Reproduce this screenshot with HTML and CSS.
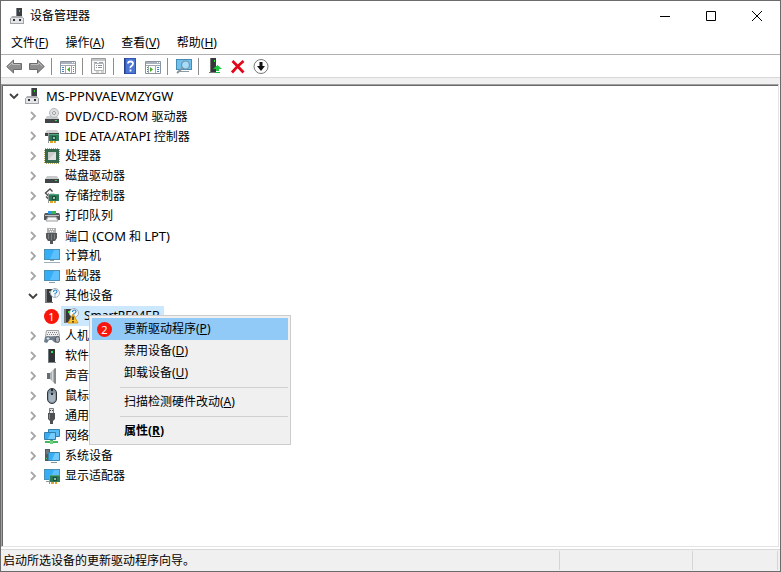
FILE: index.html
```html
<!DOCTYPE html>
<html lang="zh-CN">
<head>
    <meta charset="UTF-8">
    <meta name="viewport" content="width=device-width, initial-scale=1.0">
    <title>设备管理器</title>
    <link rel="stylesheet" href="styles.css">
</head>
<body>

    <!-- Shared icons -->
    <svg class="sprite" aria-hidden="true">
        <symbol id="closed" viewBox="0 0 16 16">
            <path d="M6 4l4 4-4 4" fill="none" stroke="#a6a6a6" stroke-width="1.8"/>
        </symbol>
        <symbol id="open" viewBox="0 0 16 16">
            <path d="M4 6l4 4 4-4" fill="none" stroke="#404040" stroke-width="1.8"/>
        </symbol>
        <symbol id="machine" viewBox="0 0 16 16">
            <path d="M6 0h6v9H6z" fill="#3c4043"/>
            <path d="M6 0h1v9H6z" fill="#80858a"/>
            <path d="M9 2h1v2H9z" fill="#2fd12f"/>
            <path d="M2 8h10l2 3H0z" fill="#aeb0b4"/>
            <path d="M0 10h14v6H0z" fill="#a2a4a8"/>
            <path d="M1 10h12v5H1z" fill="#e4e5e8"/>
            <path d="M3 11h2v2H3zM9 11h2v2H9z" fill="#333"/>
        </symbol>
        <symbol id="tower" viewBox="0 0 16 16">
            <path d="M2 1h6v14H2z" fill="#34383a"/>
            <path d="M1 1h2v14H1z" fill="#7b7e80"/>
            <path d="M5 3h2v2H5z" fill="#27e427"/>
            <path d="M1 14h8v1H1z" fill="#777"/>
        </symbol>
        <symbol id="screen" viewBox="0 0 16 16">
            <path d="M0 2h16v11H0z" fill="#4a8fb5"/>
            <path d="M1 3h14v9H1z" fill="#35adf7"/>
            <path d="M10 3h5v9H6z" fill="#5dc0fd"/>
        </symbol>
        <symbol id="drive" viewBox="0 0 16 16">
            <path d="M3 8h10l2 3H1z" fill="#c9cacc"/>
            <path d="M1 11h14v4H1z" fill="#3f4446"/>
            <path d="M11 12h2v1h-2z" fill="#32dc4a"/>
        </symbol>
        <symbol id="card" viewBox="0 0 16 16">
            <path d="M5 6h10v7H5z" fill="#2b7a55"/>
            <path d="M5 6h10v1H5z" fill="#4fa57b"/>
            <path d="M4 5h1v10H4z" fill="#91989a"/>
            <path d="M8 8h4v4H8z" fill="#1d4f40"/>
            <path d="M9 9h2v2H9z" fill="#8fc3a4"/>
            <path d="M6 13h3v2H6zM10 13h2v2h-2z" fill="#e6a12c"/>
        </symbol>
        <symbol id="unknown" viewBox="0 0 16 16">
            <use href="#tower"/>
            <circle cx="11" cy="5" r="4.5" fill="#f5f9fc" stroke="#a7adb2"/>
            <path d="M9.500 4q0-2 2-2 1.500 0 1.500 1.500T11 5.500v1M11 7.500v1" fill="none" stroke="#2582c9" stroke-width="1.100"/>
        </symbol>
    </svg>

    <div class="window">
        <header class="titlebar">
            <svg class="icon" viewBox="0 0 16 16"><use href="#machine"/></svg>
            <h1>设备管理器</h1>
            <div class="controls">
                <button type="button" aria-label="最小化"><svg viewBox="0 0 12 12"><path d="M1 6.500h10"/></svg></button>
                <button type="button" aria-label="最大化"><svg viewBox="0 0 12 12"><path d="M1.500 1.500h9v9h-9z"/></svg></button>
                <button type="button" aria-label="关闭"><svg viewBox="0 0 12 12"><path d="M1 1l10 10M11 1L1 11"/></svg></button>
            </div>
        </header>

        <nav class="menubar">
            <button type="button">文件(<u>F</u>)</button>
            <button type="button">操作(<u>A</u>)</button>
            <button type="button">查看(<u>V</u>)</button>
            <button type="button">帮助(<u>H</u>)</button>
        </nav>

        <div class="toolbar">
            <button type="button" aria-label="后退">
                <svg class="icon" viewBox="0 0 16 16"><path d="M.7 8.500L7.500 2v3.500h8v6h-8V15z" fill="#8f8f8f" stroke="#6c6c6c"/><path d="M2.500 8.500l4-4v2H14" fill="none" stroke="#bdbdbd"/></svg>
            </button>
            <button type="button" aria-label="前进">
                <svg class="icon" viewBox="0 0 16 16"><path d="M15.300 8.500L8.500 2v3.500h-8v6h8V15z" fill="#8f8f8f" stroke="#6c6c6c"/><path d="M2 6.500h7.500v-2l4 4" fill="none" stroke="#bdbdbd"/></svg>
            </button>
            <span class="divider"></span>
            <button type="button" aria-label="显示/隐藏控制台树">
                <svg class="icon" viewBox="0 0 16 16"><path d="M.5 3.500h15v12H.5z" fill="#fff" stroke="#8994a0"/><path d="M1 4h14v2H1z" fill="#aab3bd"/><path d="M12 4h1v1h-1zM14 4h1v1h-1z" fill="#fff"/><path d="M1 7.500h14M5.500 8v7M11.500 8v7" stroke="#9da7b1"/><path d="M2 9.500h2M2 11.500h2M2 13.500h2M13 9.500h1M13 11.500h1M13 13.500h1" stroke="#3f82bd"/><path d="M10 9v5l-3-2.500z" fill="#44ad27"/></svg>
            </button>
            <span class="divider"></span>
            <button type="button" aria-label="属性">
                <svg class="icon" viewBox="0 0 16 16"><path d="M.5.5h14v15H.5z" fill="#f8f8f8" stroke="#9a9a9a"/><path d="M1 1h13v2H1z" fill="#c4c7ca"/><path d="M3.500 5.500h9v7h-9z" fill="#fff" stroke="#b0b4b7"/><path d="M3 4.500h3M8 4.500h4" stroke="#a0a3aa"/><path d="M5 7.500h1M7 7.500h4M5 9.500h1M7 9.500h4" stroke="#8a939b"/><path d="M5 14h3M10 14h3" stroke="#aaa"/></svg>
            </button>
            <span class="divider"></span>
            <button type="button" aria-label="帮助">
                <svg class="icon" viewBox="0 0 16 16"><path d="M2 0h12v16H2z" fill="#3155b5"/><path d="M4 1h9v14H4z" fill="#4c76d3"/><path d="M2 0h1v16H2z" fill="#263e87"/><path d="M6 5.500Q6 3.500 8.500 3.500T11 5.500Q11 7 9.500 8T8.500 10M8.500 11.500v2" fill="none" stroke="#fff" stroke-width="1.800"/></svg>
            </button>
            <button type="button" aria-label="显示/隐藏操作窗格">
                <svg class="icon" viewBox="0 0 16 16"><path d="M.5 3.500h15v12H.5z" fill="#fff" stroke="#8994a0"/><path d="M1 4h14v2H1z" fill="#aab3bd"/><path d="M12 4h1v1h-1zM14 4h1v1h-1z" fill="#fff"/><path d="M1 7.500h14M3.500 8v7M10.500 8v7" stroke="#9da7b1"/><path d="M12 9.500h2M12 11.500h2M12 13.500h2M2 9.500h1M2 11.500h1M2 13.500h1" stroke="#3f82bd"/><path d="M5 9v5l3-2.500z" fill="#44ad27"/></svg>
            </button>
            <span class="divider"></span>
            <button type="button" aria-label="扫描检测硬件改动">
                <svg class="icon" viewBox="0 0 16 16"><path d="M0 1h16v11H0z" fill="#438db5"/><path d="M1 2h14v9H1z" fill="#70c1ef"/><path d="M4 13h9v1H4z" fill="#8d999f"/><circle cx="9.500" cy="7" r="4" fill="#a5dcfa" stroke="#7592a3" stroke-width="1.200"/><path d="M6.500 10L1 15" stroke="#8295a0" stroke-width="2"/></svg>
            </button>
            <span class="divider"></span>
            <button type="button" aria-label="更新驱动程序">
                <svg class="icon" viewBox="0 0 16 16"><path d="M3 0h6v14H3z" fill="#34383a"/><path d="M3 0h1v14H3z" fill="#777"/><path d="M7 2h1v2H7z" fill="#2ee52e"/><path d="M2 14h7v1H2z" fill="#777"/><path d="M10.500 7L15 11h-3v2H9v-2H6z" fill="#19c83b"/><path d="M9 14h4v1H9z" fill="#19b83b"/></svg>
            </button>
            <button type="button" aria-label="卸载设备">
                <svg class="icon" viewBox="0 0 16 16"><path d="M2.500 3q4 4 11 11.500M13.500 3Q7 8.500 2 14.500" fill="none" stroke="#df0718" stroke-width="2.800"/></svg>
            </button>
            <button type="button" aria-label="禁用设备">
                <svg class="icon" viewBox="0 0 16 16"><circle cx="8" cy="8.500" r="7" fill="#fff" stroke="#777"/><path d="M6.500 4h3v4H12l-4 5-4-5h2.500z" fill="#111"/></svg>
            </button>
        </div>

        <main class="pane">
            <div class="tree">
                <div class="row">
                    <button type="button" class="toggle" aria-label="折叠"><svg><use href="#open"/></svg></button>
                    <svg class="icon" viewBox="0 0 16 16"><use href="#machine"/></svg>
                    <span class="latin">MS-PPNVAEVMZYGW</span>
                </div>
                <ul>
                    <li class="row">
                        <button type="button" class="toggle" aria-label="展开"><svg><use href="#closed"/></svg></button>
                        <svg class="icon" viewBox="0 0 16 16"><use href="#drive"/><circle cx="10" cy="5" r="4.500" fill="#dfe1e3" stroke="#b4b7ba"/><circle cx="10" cy="5" r="1.500" fill="#fff" stroke="#999"/></svg>
                        <span><span class="latin">DVD/CD-ROM</span> 驱动器</span>
                    </li>
                    <li class="row">
                        <button type="button" class="toggle" aria-label="展开"><svg><use href="#closed"/></svg></button>
                        <svg class="icon" viewBox="0 0 16 16"><path d="M3 2h10l2 3H1z" fill="#d0d1d3"/><path d="M1 5h14v3H1z" fill="#3e4445"/><use href="#card"/></svg>
                        <span><span class="latin">IDE ATA/ATAPI</span> 控制器</span>
                    </li>
                    <li class="row">
                        <button type="button" class="toggle" aria-label="展开"><svg><use href="#closed"/></svg></button>
                        <svg class="icon" viewBox="0 0 16 16"><path d="M1 1h14v14H1z" fill="none" stroke="#b5a75a" stroke-width="2" stroke-dasharray="1 1"/><path d="M1 1h14v14H1z" fill="#35694f"/><path d="M4 4h8v8H4z" fill="#c9cccb"/><path d="M4 12l8-8v8z" fill="#e0e2e1"/></svg>
                        <span>处理器</span>
                    </li>
                    <li class="row">
                        <button type="button" class="toggle" aria-label="展开"><svg><use href="#closed"/></svg></button>
                        <svg class="icon" viewBox="0 0 16 16"><use href="#drive"/></svg>
                        <span>磁盘驱动器</span>
                    </li>
                    <li class="row">
                        <button type="button" class="toggle" aria-label="展开"><svg><use href="#closed"/></svg></button>
                        <svg class="icon" viewBox="0 0 16 16"><path d="M8.500 3.500L6 1 1.500 5 6 9.500l3-3H6M2 8.500l3.500 3.500" fill="none" stroke="#4b4f51" stroke-width="1.400"/><use href="#card"/></svg>
                        <span>存储控制器</span>
                    </li>
                    <li class="row">
                        <button type="button" class="toggle" aria-label="展开"><svg><use href="#closed"/></svg></button>
                        <svg class="icon" viewBox="0 0 16 16"><path d="M4 3h8v4H4z" fill="#2898eb"/><path d="M8 3h3v3H8z" fill="#39b65d"/><path d="M1 5h3v1h8V5h3l1 2v5h-2l-2-3H4l-2 3H0V7z" fill="#55595c"/><path d="M1 7h14v1H1z" fill="#bfc2c4"/><path d="M4 9h8l2 4H2z" fill="#f5f5f5" stroke="#9ca0a3"/></svg>
                        <span>打印队列</span>
                    </li>
                    <li class="row">
                        <button type="button" class="toggle" aria-label="展开"><svg><use href="#closed"/></svg></button>
                        <svg class="icon" viewBox="0 0 16 16"><path d="M3 0h9v5H3z" fill="#aeb0b1"/><path d="M5 1h1v1H5zM7 1h1v1H7zM9 1h1v1H9zM6 3h1v1H6zM8 3h1v1H8z" fill="#fff"/><path d="M2 5h11v5l-2 3H9v3H6v-3H4l-2-3z" fill="#54585a"/><path d="M4.500 6v5M7.500 6v6M10.500 6v5" stroke="#7c8082"/></svg>
                        <span>端口 <span class="latin">(COM</span> 和 <span class="latin">LPT)</span></span>
                    </li>
                    <li class="row">
                        <button type="button" class="toggle" aria-label="展开"><svg><use href="#closed"/></svg></button>
                        <svg class="icon" viewBox="0 0 16 16"><g transform="translate(0 -1)"><use href="#screen"/></g><path d="M6 12h4v1H6z" fill="#8c9da6"/><path d="M0 14h16v1H0z" fill="#9dafbf"/></svg>
                        <span>计算机</span>
                    </li>
                    <li class="row">
                        <button type="button" class="toggle" aria-label="展开"><svg><use href="#closed"/></svg></button>
                        <svg class="icon" viewBox="0 0 16 16"><use href="#screen"/><path d="M5 14h6v1H5z" fill="#8ba1ae"/></svg>
                        <span>监视器</span>
                    </li>
                    <li>
                        <div class="row">
                            <button type="button" class="toggle" aria-label="折叠"><svg><use href="#open"/></svg></button>
                            <svg class="icon" viewBox="0 0 16 16"><use href="#unknown"/></svg>
                            <span>其他设备</span>
                        </div>
                        <div class="row device">
                            <b class="badge">1</b>
                            <div class="selected">
                                <svg class="icon" viewBox="0 0 16 16"><use href="#unknown"/><path d="M10 6l5 9H5z" fill="#ffc52e" stroke="#d79519"/><path d="M10 8.500v3.500M10 13v1.500" stroke="#222" stroke-width="1.500"/></svg>
                                <span>SmartRF04EB</span>
                            </div>

                            <!-- Context menu -->
                            <div class="context-menu" role="menu">
                                <button type="button" role="menuitem" class="active"><b class="badge">2</b>更新驱动程序(<u>P</u>)</button>
                                <button type="button" role="menuitem">禁用设备(<u>D</u>)</button>
                                <button type="button" role="menuitem">卸载设备(<u>U</u>)</button>
                                <hr>
                                <button type="button" role="menuitem">扫描检测硬件改动(<u>A</u>)</button>
                                <hr>
                                <button type="button" role="menuitem" class="default">属性(<u>R</u>)</button>
                            </div>
                        </div>
                    </li>
                    <li class="row">
                        <button type="button" class="toggle" aria-label="展开"><svg><use href="#closed"/></svg></button>
                        <svg class="icon" viewBox="0 0 16 16"><path d="M2.500 2.500h12l1 6H1.500z" fill="#f0f0f1" stroke="#9da1a3"/><path d="M4 4.500h10M3 6.500h12" stroke="#7d8285" stroke-dasharray="1 1"/><path d="M1 9l3-1 2 1h2l3-1 1 2v5l-2-1-2-2H5l-2 3-3-1z" fill="#6d7c8c"/><path d="M4 9v3M2.500 10.500h3" stroke="#d8e5f0"/><rect x="11.500" y="8.500" width="4" height="6" rx="2" fill="#a9afb5" stroke="#4f5459"/></svg>
                        <span>人机</span>
                    </li>
                    <li class="row">
                        <button type="button" class="toggle" aria-label="展开"><svg><use href="#closed"/></svg></button>
                        <svg class="icon" viewBox="0 0 16 16"><path d="M4 1h7v13H4z" fill="#303436"/><path d="M4 1h1v13H4z" fill="#70777a"/><path d="M7 3h2v2H7z" fill="#2fe24b"/><path d="M4 14h8v1H4z" fill="#888"/></svg>
                        <span>软件</span>
                    </li>
                    <li class="row">
                        <button type="button" class="toggle" aria-label="展开"><svg><use href="#closed"/></svg></button>
                        <svg class="icon" viewBox="0 0 16 16"><path d="M3 5h3v6H3z" fill="#666b6e"/><path d="M6 5l5-5v16l-5-5z" fill="#aeb2b4"/><path d="M8 3l1-1v12l-1-1z" fill="#d3d6d8"/><path d="M10 1l2-1v16l-2-1z" fill="#83888b"/></svg>
                        <span>声音</span>
                    </li>
                    <li class="row">
                        <button type="button" class="toggle" aria-label="展开"><svg><use href="#closed"/></svg></button>
                        <svg class="icon" viewBox="0 0 16 16"><rect x="3.500" y=".5" width="9" height="15" rx="4.500" fill="#8594a3" stroke="#30363c"/><path d="M5 5q3 3 6 0v7q-3 4-6 0z" fill="#a8b5c0"/><path d="M8 1v6" stroke="#252a2e" stroke-width="2"/><path d="M8 3v2" stroke="#d1dce4"/></svg>
                        <span>鼠标</span>
                    </li>
                    <li class="row">
                        <button type="button" class="toggle" aria-label="展开"><svg><use href="#closed"/></svg></button>
                        <svg class="icon" viewBox="0 0 16 16"><path d="M5.500.5h4v5h-4z" fill="#e5e6e7" stroke="#777b7d"/><path d="M6 2h1v1H6zM8 2h1v1H8z" fill="#444"/><path d="M4 5h7v6l-2 2v3H6v-3l-2-2z" fill="#4d5153"/><path d="M5 6h1v5H5z" fill="#85898b"/></svg>
                        <span>通用</span>
                    </li>
                    <li class="row">
                        <button type="button" class="toggle" aria-label="展开"><svg><use href="#closed"/></svg></button>
                        <svg class="icon" viewBox="0 0 16 16"><path d="M4.500 1.500h11v7h-11z" fill="#5abcf4" stroke="#347fa9"/><path d="M.5 4.500h11v7H.5z" fill="#39adf4" stroke="#347fa9"/><path d="M7 5h4v6H4z" fill="#78ccfb"/><path d="M6 12h3v1h5v2H1v-2h5z" fill="#47b55b"/><path d="M6 13h3v3H6z" fill="#70d27e"/></svg>
                        <span>网络</span>
                    </li>
                    <li class="row">
                        <button type="button" class="toggle" aria-label="展开"><svg><use href="#closed"/></svg></button>
                        <svg class="icon" viewBox="0 0 16 16"><path d="M1 1h5v12H1z" fill="#515a60"/><path d="M2 3h3M2 5h3" stroke="#8c959b"/><path d="M2 10h1v1H2z" fill="#39dd50"/><path d="M4.500 4.500h11v8h-11z" fill="#36adf5" stroke="#3984aa"/><path d="M11 5h4v7H8z" fill="#6fc9fc"/><path d="M7 14h6v1H7z" fill="#84949d"/></svg>
                        <span>系统设备</span>
                    </li>
                    <li class="row">
                        <button type="button" class="toggle" aria-label="展开"><svg><use href="#closed"/></svg></button>
                        <svg class="icon" viewBox="0 0 16 16"><g transform="translate(0 -1)"><use href="#screen"/></g><path d="M2 13h3v1H2z" fill="#8295a0"/><g transform="translate(1 1)"><use href="#card"/></g></svg>
                        <span>显示适配器</span>
                    </li>
                </ul>
            </div>
        </main>

        <footer class="statusbar">
            <span>启动所选设备的更新驱动程序向导。</span>
            <span></span>
            <span></span>
        </footer>
    </div>

</body>
</html>
```

FILE: styles.css
```css
* {
    box-sizing: border-box;
}

body {
    margin: 0;
    font-family: "Noto Sans", "Noto Sans CJK SC", sans-serif;
    font-size: 12px;
    line-height: 20px;
    color: #000;
}

button {
    padding: 0;
    border: none;
    background: none;
    color: inherit;
    font: inherit;
}

u {
    text-underline-offset: 1px;
}

.latin {
    font-size: 13px;
}

.sprite {
    position: absolute;
    width: 0;
    height: 0;
}

.icon {
    display: block;
    flex: none;
    width: 16px;
    height: 16px;
}

.window {
    display: flex;
    flex-direction: column;
    min-height: 100vh;
    border: 1px solid #6b6b6b;
    background-color: #fff;
}

/* Title bar */
.titlebar {
    display: flex;
    align-items: center;
    height: 30px;
    padding-left: 9px;
}

.titlebar h1 {
    flex: 1;
    margin: 0 0 0 4px;
    font-size: 12px;
    font-weight: normal;
}

.controls {
    display: flex;
}

.controls button {
    display: flex;
    align-items: center;
    justify-content: center;
    width: 46px;
    height: 30px;
}

.controls svg {
    width: 12px;
    height: 12px;
    fill: none;
    stroke: #000;
}

/* Menu bar */
.menubar {
    display: flex;
    gap: 1px;
    height: 24px;
    padding-left: 2px;
    border-bottom: 1px solid #b0b0b0;
}

.menubar button {
    padding: 0 8px;
}

/* Toolbar */
.toolbar {
    display: flex;
    height: 23px;
    padding-left: 1px;
    border-bottom: 1px solid #d8d8d8;
}

.toolbar button {
    display: flex;
    align-items: center;
    width: 23px;
    padding-left: 4px;
}

.divider {
    width: 1px;
    margin: 3px 4px 2px 3px;
    background-color: #8c8c8c;
}

/* Device tree */
.pane {
    display: flex;
    flex: 1;
    padding: 0 1px 2px 0;
    border-top: 6px solid #f0f0f0;
}

.tree {
    flex: 1;
    padding: 1px 0 0 1px;
    border: 1px solid #e3e3e3;
    border-top-color: #a0a0a0;
    border-left-color: #a0a0a0;
    box-shadow: inset 1px 1px 0 #696969;
}

.tree ul {
    margin: 0;
    padding: 0 0 0 19px;
    list-style: none;
}

.row {
    display: flex;
    align-items: center;
    height: 20px;
    padding-left: 3px;
    white-space: nowrap;
}

.row > .icon {
    margin: 0 5px 0 3px;
}

.toggle {
    width: 16px;
    height: 16px;
}

.toggle svg {
    display: block;
    width: 16px;
    height: 16px;
}

.device {
    position: relative;
    padding-left: 22px;
}

.badge {
    flex: none;
    width: 15px;
    height: 15px;
    border-radius: 50%;
    background-color: #f9150b;
    color: #fff;
    font-size: 11px;
    font-weight: normal;
    line-height: 15px;
    text-align: center;
}

.selected {
    display: flex;
    align-items: center;
    gap: 5px;
    height: 20px;
    margin-left: 2px;
    padding: 0 4px 0 2px;
    background-color: #cce8ff;
}

/* Context menu */
.context-menu {
    position: absolute;
    z-index: 1;
    top: 9px;
    left: 67px;
    width: 202px;
    padding: 2px;
    border: 1px solid #ccc;
    background-color: #f0f0f0;
}

.context-menu button {
    display: flex;
    align-items: center;
    width: 100%;
    height: 22px;
    padding-left: 32px;
    text-align: left;
}

.context-menu .active {
    padding-left: 5px;
    background-color: #91c9f7;
}

.context-menu .badge {
    margin-right: 12px;
}

.context-menu .default {
    font-weight: bold;
}

.context-menu hr {
    height: 1px;
    margin: 3px 0 3px 28px;
    border: none;
    background-color: #d0d0d0;
}

/* Status bar */
.statusbar {
    display: flex;
    height: 22px;
    padding: 1px 2px 1px 0;
    border-top: 1px solid #d8d8d8;
    background-color: #f0f0f0;
}

.statusbar span {
    flex: 0 0 133px;
    border-right: 1px solid #d5d5d5;
}

.statusbar span:first-child {
    flex: 1;
    padding-left: 2px;
}

.statusbar span:last-child {
    flex-basis: 85px;
}
```
